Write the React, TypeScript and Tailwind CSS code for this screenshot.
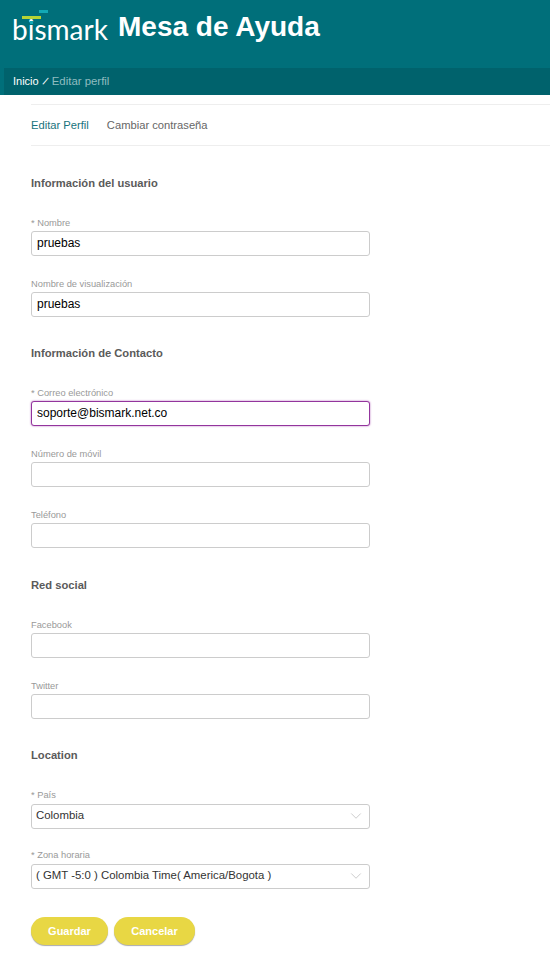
import React from "react";
import { ChevronDown } from "lucide-react";

const Field = ({ label, value, focused, mt = "mt-[19px]" }: { label: string; value?: string; focused?: boolean; mt?: string }) => (
  <div className={mt}>
    <label className="block h-[17px] text-[9.3px] leading-[19px] text-[#999]">{label}</label>
    <input
      readOnly
      value={value ?? ""}
      className={`block h-[25px] w-[339px] rounded-[3px] border bg-white px-[5px] pb-[1px] text-[12px] text-black outline-none ${
        focused ? "border-[#93359d] shadow-[0_0_2px_#b060b8]" : "border-[#ccc]"
      }`}
    />
  </div>
);

const SelectField = ({ label, value, mt }: { label: string; value: string; mt: string }) => (
  <div className={mt}>
    <label className="block h-[17px] text-[9.3px] leading-[17px] text-[#999]">{label}</label>
    <div className="flex h-[25px] w-[339px] items-center justify-between rounded-[3px] border border-[#ccc] bg-white pb-[1px] pl-[4px] pr-[4px] text-[11.4px] text-[#333]">
      <span>{value}</span>
      <ChevronDown className="h-[18px] w-[18px] text-[#bbb]" strokeWidth={1} />
    </div>
  </div>
);

const Heading = ({ children, mt }: { children: React.ReactNode; mt: string }) => (
  <h3 className={`h-[16px] text-[11.2px] font-bold leading-[16px] text-[#5a5a5a] ${mt}`}>{children}</h3>
);

export default function App() {
  return (
    <div className="h-[953px] w-[550px] overflow-hidden bg-white font-['Liberation_Sans',Arial,sans-serif]">
      {/* header */}
      <header className="bg-[#006f7a]">
        <div className="flex h-[68px] items-start pl-[12px]">
          <div className="relative mt-[15px] w-[106px] font-['Lato',sans-serif] text-[28px] leading-[28px] text-white">
            bismark
            <span className="absolute left-[10px] top-[1px] h-[3px] w-[19px] bg-[#b5d334]" />
            <span className="absolute left-[27px] top-[-5px] h-[3px] w-[9px] bg-[#12a9b5]" />
            <span className="absolute left-[18px] top-[6px] h-[3px] w-[3px] bg-[#12a9b5]" />
          </div>
          <h1 className="mt-[11px] text-[28px] font-bold leading-[32px] text-white">Mesa de Ayuda</h1>
        </div>
        <div className="ml-[4px] flex h-[27px] items-center bg-[#00626c] pl-[9px] text-[11px]">
          <span className="text-white">Inicio</span>
          <span className="mx-[5px] inline-block rotate-[25deg] text-[11px] text-white">/</span>
          <span className="text-[11.4px] text-[#8fbcc0]">Editar perfil</span>
        </div>
      </header>

      <div className="pl-[31px]">
        {/* tabs */}
        <div className="mt-[9px] flex h-[42px] items-center gap-[18px] border-y border-[#eee] text-[11.2px]">
          <span className="text-[#17737d]">Editar Perfil</span>
          <span className="text-[#666]">Cambiar contraseña</span>
        </div>

        <Heading mt="mt-[29px]">Información del usuario</Heading>
        <Field mt="mt-[23px]" label="* Nombre" value="pruebas" />
        <Field label="Nombre de visualización" value="pruebas" />

        <Heading mt="mt-[28px]">Información de Contacto</Heading>
        <Field mt="mt-[23px]" label="* Correo electrónico" value="soporte@bismark.net.co" focused />
        <Field label="Número de móvil" />
        <Field label="Teléfono" />

        <Heading mt="mt-[29px]">Red social</Heading>
        <Field mt="mt-[23px]" label="Facebook" />
        <Field label="Twitter" />

        <Heading mt="mt-[28px]">Location</Heading>
        <SelectField mt="mt-[24px]" label="* País" value="Colombia" />
        <SelectField mt="mt-[18px]" label="* Zona horaria" value="( GMT -5:0 ) Colombia Time( America/Bogota )" />

        {/* actions */}
        <div className="mt-[28px] flex gap-[6px]">
          <button className="h-[28px] w-[77px] rounded-full bg-[#e8d744] text-[11px] font-bold text-white shadow-[0_1px_1px_#aaa]">Guardar</button>
          <button className="h-[28px] w-[81px] rounded-full bg-[#e8d744] text-[11px] font-bold text-white shadow-[0_1px_1px_#aaa]">Cancelar</button>
        </div>
      </div>
    </div>
  );
}
